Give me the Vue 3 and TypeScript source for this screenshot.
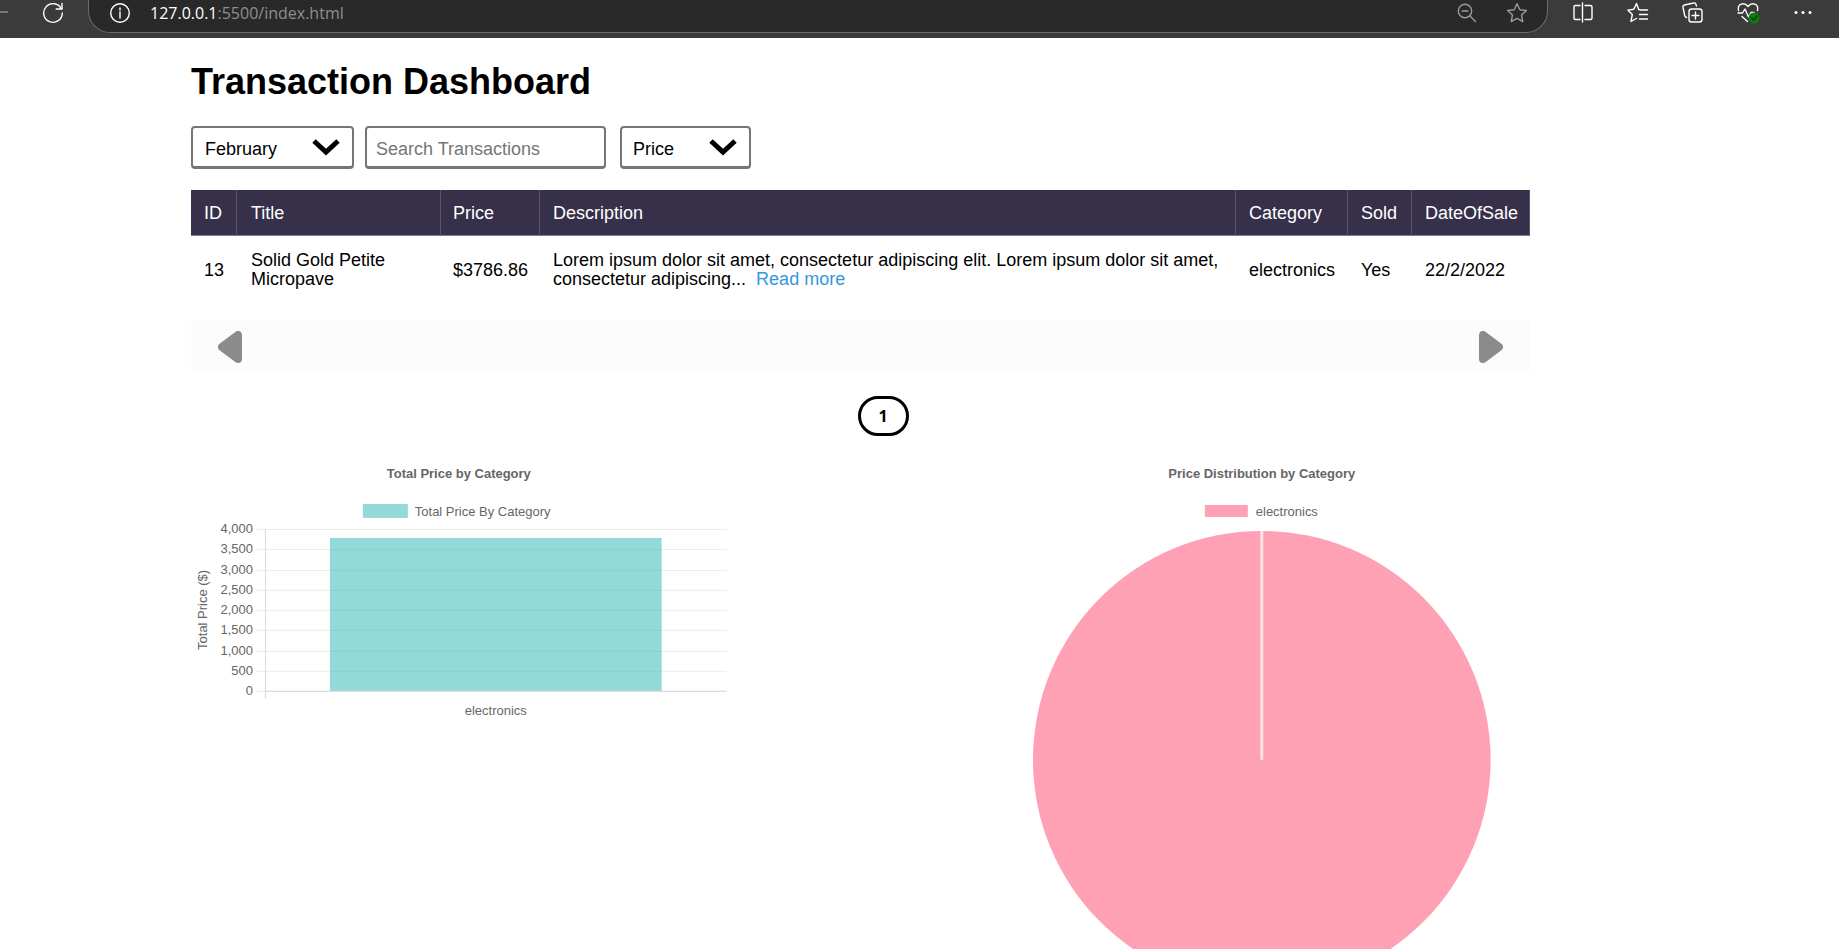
<script setup lang="ts">
import { ref } from 'vue'

interface Transaction {
  id: number
  title: string
  price: string
  description: string
  category: string
  sold: boolean
  date: string
}

const months = ['January', 'February', 'March', 'April', 'May', 'June', 'July', 'August', 'September', 'October', 'November', 'December']
const filters = ['Price', 'Title', 'Description']
const month = ref('February')
const filter = ref('Price')
const search = ref('')
const address = ref('/index.html')

const transactions: Transaction[] = [
  {
    id: 13,
    title: 'Solid Gold Petite Micropave',
    price: '$3786.86',
    description: 'Lorem ipsum dolor sit amet, consectetur adipiscing elit. Lorem ipsum dolor sit amet, consectetur adipiscing...',
    category: 'electronics',
    sold: true,
    date: '22/2/2022',
  },
]

// Vertical axis of the bar chart
const axisTop = 73
const axisBottom = 235
const axisMax = 4000
const yFor = (value: number) => Math.round(axisBottom - (value / axisMax) * (axisBottom - axisTop))
const ticks = [4000, 3500, 3000, 2500, 2000, 1500, 1000, 500, 0].map((value) => ({
  value,
  label: value.toLocaleString('en-US'),
  y: yFor(value),
}))
const barTop = yFor(3786.86)
</script>

<template>
  <div class="window">
    <header class="toolbar">
      <div class="nav">
        <svg class="dash" viewBox="0 0 8 24" aria-hidden="true"><path d="M0 12h8" /></svg>
        <button type="button" class="tool" aria-label="Refresh">
          <svg viewBox="0 0 24 24"><path d="M20.4 9A9.3 9.3 0 1 0 21.3 13" /><path d="M21 3.5V9h-5.8" /></svg>
        </button>
      </div>
      <div class="address">
        <button type="button" class="tool" aria-label="View site information">
          <svg viewBox="0 0 24 24"><circle cx="12" cy="13" r="9.3" /><path d="M12 12v6M12 8v2" /></svg>
        </button>
        <p class="url"><span class="host">127.0.0.1</span>:5500{{ address }}</p>
        <button type="button" class="tool dim" aria-label="Zoom">
          <svg viewBox="0 0 24 24"><circle cx="10" cy="11" r="6.7" /><path d="M7 11h6M15 16l5.500 5.500" /></svg>
        </button>
        <button type="button" class="tool dim" aria-label="Add to favourites">
          <svg viewBox="0 0 24 24"><path d="M12 3.700l2.800 6 6.600.8-4.900 4.500 1.300 6.600-5.800-3.300-5.800 3.300 1.300-6.600-4.900-4.500 6.600-.8z" /></svg>
        </button>
      </div>
      <div class="actions">
        <button type="button" class="tool" aria-label="Split screen">
          <svg viewBox="0 0 24 24"><path d="M9 5.500H4.500A1.500 1.500 0 0 0 3 7v11a1.500 1.500 0 0 0 1.500 1.500H9M14 5.500h5.500A1.500 1.500 0 0 1 21 7v11a1.500 1.500 0 0 1-1.500 1.500H14M11.500 3v19" /></svg>
        </button>
        <button type="button" class="tool" aria-label="Favourites">
          <svg viewBox="0 0 24 24"><path d="M15 10l-2.300-.5L10.500 3.500 7.800 9.300l-6 .8 4.500 4.400L5 21.500l5.500-3M14.500 10H21.500M13.500 14.500h8M13.500 19h8" /></svg>
        </button>
        <button type="button" class="tool" aria-label="Collections">
          <svg viewBox="0 0 24 24"><rect x="8" y="9" width="13" height="13" rx="2.500" /><path d="M14.500 12v7M11 15.500h7M5.500 17.500c-1-.5-1.500-1-1.800-2L2 7.500a2 2 0 0 1 1.500-2.500L12.500 3a2 2 0 0 1 2.500 1.500l.5 1.500" /></svg>
        </button>
        <button type="button" class="tool" aria-label="Browser essentials">
          <svg viewBox="0 0 24 24"><path d="M2.500 10.500C1 4 8 1.500 12 6.500 16 1.500 23 4 21.500 10.500M2 13h4.500L9 9l3.500 8 2.500-4.500h3M6 16.500l5.500 5" /><circle class="ok" cx="18" cy="18" r="5.500" /><path class="ok-tick" d="M15.500 18l2 2 3.500-4" /></svg>
        </button>
        <button type="button" class="tool" aria-label="Settings and more">
          <svg viewBox="0 0 24 24"><g class="dots"><circle cx="5" cy="12.500" r="1.500" /><circle cx="12" cy="12.500" r="1.500" /><circle cx="19" cy="12.500" r="1.500" /></g></svg>
        </button>
      </div>
    </header>

    <main class="page">
      <h1>Transaction Dashboard</h1>

      <form class="filters" @submit.prevent>
        <div class="select month">
          <select v-model="month" aria-label="Month">
            <option v-for="m in months" :key="m">{{ m }}</option>
          </select>
          <svg viewBox="0 0 28 18" aria-hidden="true"><path d="M2 3l12 11L26 3" /></svg>
        </div>
        <input v-model="search" type="text" placeholder="Search Transactions" aria-label="Search Transactions" />
        <div class="select sort">
          <select v-model="filter" aria-label="Search field">
            <option v-for="f in filters" :key="f">{{ f }}</option>
          </select>
          <svg viewBox="0 0 28 18" aria-hidden="true"><path d="M2 3l12 11L26 3" /></svg>
        </div>
      </form>

      <table>
        <colgroup>
          <col class="c-id" /><col class="c-title" /><col class="c-price" /><col />
          <col class="c-category" /><col class="c-sold" /><col class="c-date" />
        </colgroup>
        <thead>
          <tr>
            <th scope="col">ID</th>
            <th scope="col">Title</th>
            <th scope="col">Price</th>
            <th scope="col">Description</th>
            <th scope="col">Category</th>
            <th scope="col">Sold</th>
            <th scope="col">DateOfSale</th>
          </tr>
        </thead>
        <tbody>
          <tr v-for="t in transactions" :key="t.id">
            <td>{{ t.id }}</td>
            <td>{{ t.title }}</td>
            <td>{{ t.price }}</td>
            <td>{{ t.description }} <a href="#">Read more</a></td>
            <td>{{ t.category }}</td>
            <td>{{ t.sold ? 'Yes' : 'No' }}</td>
            <td>{{ t.date }}</td>
          </tr>
        </tbody>
      </table>

      <nav class="pager" aria-label="Pages">
        <button type="button" aria-label="Previous page">
          <svg viewBox="0 0 24 32"><path d="M20 4v24L4 16z" /></svg>
        </button>
        <button type="button" aria-label="Next page">
          <svg viewBox="0 0 24 32"><path d="M4 4v24l16-12z" /></svg>
        </button>
      </nav>
      <div class="numbers">
        <button type="button" class="number" aria-current="page">1</button>
      </div>

      <section class="charts">
        <svg class="chart" viewBox="0 0 536 268" role="img" aria-label="Total Price by Category">
          <text class="heading" x="268" y="22">Total Price by Category</text>
          <rect class="teal" x="172" y="48" width="45" height="14" />
          <text x="224" y="60">Total Price By Category</text>
          <text class="middle" transform="translate(16 154) rotate(-90)">Total Price ($)</text>
          <g v-for="t in ticks" :key="t.value">
            <rect class="grid" x="66" :y="t.y" width="470" height="1" />
            <text class="end" x="62" :y="t.y + 4">{{ t.label }}</text>
          </g>
          <rect class="axis" x="74" y="73" width="1" height="170" />
          <rect class="axis" x="74" y="235" width="462" height="1" />
          <rect class="teal" x="139" :y="barTop" width="332" :height="axisBottom - barTop" />
          <text class="middle" x="305" y="259">electronics</text>
        </svg>
        <svg class="chart" viewBox="0 0 536 536" role="img" aria-label="Price Distribution by Category">
          <text class="heading" x="268" y="22">Price Distribution by Category</text>
          <rect class="pink" x="211" y="49" width="43" height="12" />
          <text x="262" y="60">electronics</text>
          <circle class="pink" cx="268" cy="304" r="229" />
          <path class="seam" d="M268 75v229" />
        </svg>
      </section>
    </main>
  </div>
</template>

<style>
html,
body {
  margin: 0;
  background: #fff;
}
</style>

<style scoped>
.window {
  height: 100vh;
  display: flex;
  flex-direction: column;
  overflow: hidden;
  font-family: "Liberation Sans", Arial, sans-serif;
  font-size: 18px;
  color: #000;
}
button {
  padding: 0;
  border: 0;
  background: none;
  color: inherit;
  font: inherit;
}
svg {
  display: block;
}

.toolbar {
  flex: none;
  height: 38px;
  display: flex;
  align-items: flex-start;
  background: #3b3b3b;
  color: #fff;
  overflow: hidden;
}
.nav {
  width: 88px;
  display: flex;
  justify-content: space-between;
  padding-right: 23px;
  box-sizing: border-box;
}
.tool svg,
.dash {
  height: 24px;
  fill: none;
  stroke: currentColor;
  stroke-width: 1.4;
  stroke-linecap: round;
  stroke-linejoin: round;
}
.tool svg {
  width: 24px;
}
.dash {
  width: 8px;
  color: #8f8f8f;
}
.address {
  flex: 1;
  height: 33px;
  display: flex;
  align-items: flex-start;
  gap: 26px;
  margin-right: 23px;
  padding: 0 18px 0 19px;
  box-sizing: border-box;
  background: #292929;
  border: 1px solid #6b6b6b;
  border-top: 0;
  border-radius: 0 0 22px 22px;
}
.url {
  flex: 1;
  margin: 0 0 0 -8px;
  font: 16px/26px "Open Sans", "Noto Sans", sans-serif;
  color: #8f8f8f;
}
.host {
  color: #fff;
}
.dim {
  color: #9a9a9a;
}
.actions {
  display: flex;
  gap: 31px;
  padding-right: 24px;
}
.ok {
  fill: #107c10;
  stroke: none;
}
.ok-tick {
  stroke: #0a3d0a;
}
.dots {
  fill: #fff;
  stroke: none;
}

.page {
  flex: 1;
  min-height: 0;
  overflow: hidden;
  padding: 23px 309px 0 191px;
}
h1 {
  margin: 0 0 23px;
  font-size: 36px;
  line-height: 42px;
}

.filters {
  display: flex;
  margin-bottom: 21px;
}
.filters input,
.filters select {
  width: 100%;
  height: 43px;
  box-sizing: border-box;
  margin: 0;
  border: 2px solid #767676;
  border-bottom-width: 3px;
  border-radius: 4px;
  background: #fff;
  color: #000;
  font: 18px "Liberation Sans", Arial, sans-serif;
}
.filters select {
  appearance: none;
  padding: 4px 0 0 12px;
}
.filters input {
  width: 241px;
  margin-right: 14px;
  padding: 4px 9px 0;
}
.filters input::placeholder {
  color: #757575;
}
.select {
  position: relative;
}
.month {
  width: 163px;
  margin-right: 11px;
}
.sort {
  width: 131px;
}
.sort select {
  padding-left: 11px;
}
.select svg {
  position: absolute;
  top: 12px;
  right: 14px;
  width: 28px;
  height: 18px;
  fill: none;
  stroke: #000;
  stroke-width: 5;
  pointer-events: none;
}

table {
  width: 100%;
  table-layout: fixed;
  border-collapse: separate;
  border-spacing: 0;
  margin-bottom: 17px;
  line-height: 19px;
  text-align: left;
}
.c-id { width: 46px; }
.c-title { width: 204px; }
.c-price { width: 99px; }
.c-category { width: 112px; }
.c-sold { width: 64px; }
.c-date { width: 118px; }
th {
  padding: 14px 0 12px 13px;
  background: #36304a;
  color: #fff;
  font-weight: 400;
  border-right: 1px solid #585365;
  border-bottom: 1px solid #85818f;
}
td {
  padding: 15px 0 15px 13px;
}
th:nth-child(2),
td:nth-child(2) {
  padding-left: 14px;
}
td:nth-child(2) {
  padding-right: 40px;
}
th:nth-child(3),
td:nth-child(3) {
  padding-left: 12px;
}
td a {
  margin-left: 5px;
  color: #3498db;
  text-decoration: none;
}

.pager {
  display: flex;
  justify-content: space-between;
  padding: 10px 27px 9px;
  background: #fcfcfc;
}
.pager svg {
  width: 24px;
  height: 32px;
  fill: #8b8b8b;
  stroke: #8b8b8b;
  stroke-width: 8;
  stroke-linejoin: round;
}
.numbers {
  display: flex;
  justify-content: center;
  padding: 24px 0 20px 45px;
}
.number {
  width: 51px;
  height: 40px;
  border: 3px solid #000;
  border-radius: 20px;
  font: bold 16px "Open Sans", "Noto Sans", sans-serif;
}

.charts {
  display: flex;
  justify-content: space-between;
  align-items: flex-start;
}
.chart {
  width: 40%;
  font-size: 13px;
  fill: #666;
}
.heading {
  font-weight: bold;
  text-anchor: middle;
}
.middle {
  text-anchor: middle;
}
.end {
  text-anchor: end;
}
.teal {
  fill: #4bc0c0;
  fill-opacity: 0.6;
}
.pink {
  fill: #ffa1b5;
}
.grid {
  fill: #ececec;
}
.axis {
  fill: #d8d8d8;
}
.seam {
  stroke: #ffe3e9;
  stroke-width: 3;
}
</style>
